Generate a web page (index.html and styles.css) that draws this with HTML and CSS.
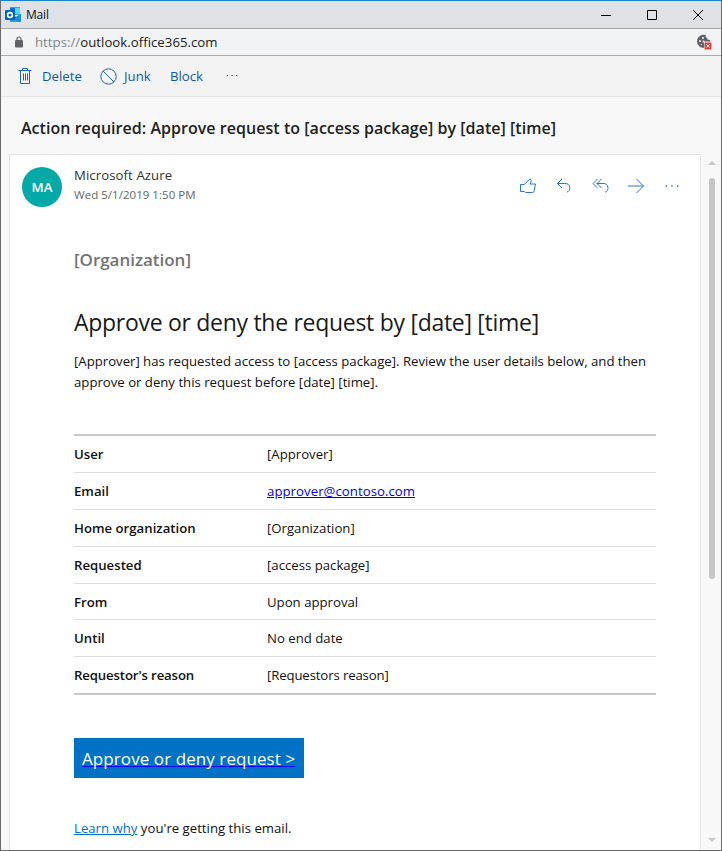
FILE: index.html
```html
<!DOCTYPE html>
<html lang="en">
<head>
<meta charset="utf-8">
<title>Mail</title>
<link rel="stylesheet" href="styles.css">
</head>
<body>
<div class="window">
  <header class="titlebar">
    <svg class="logo" width="16" height="16" viewBox="0 0 16 16">
      <path fill="#28a8ea" d="M5 0h10v8H5z"/><path fill="#50d9ff" d="M10 1h5v6h-5z"/><path fill="#0078d4" d="M5 1h5v6H5z"/>
      <path fill="#123b6d" d="M5 7l6 3 5-3v2l-7 5H5z"/><path fill="#1490df" d="M16 7v8H5l5-4z"/><path fill="#28a8ea" d="M5 13l11 2H5z"/>
      <rect y="3" width="10" height="10" rx="1" fill="#0364b8"/><circle cx="5" cy="8" r="2.4" fill="none" stroke="#fff" stroke-width="1.6"/>
    </svg>
    <span class="app-name">Mail</span>
    <div class="controls">
      <svg width="12" height="12" viewBox="0 0 12 12"><path d="M1 6.5h10"/></svg>
      <svg width="12" height="12" viewBox="0 0 12 12"><path d="M1.5 1.5h9v9h-9z"/></svg>
      <svg width="12" height="12" viewBox="0 0 12 12"><path d="M1 1l10 10M11 1L1 11"/></svg>
    </div>
  </header>
  <div class="address">
    <svg width="8" height="12" viewBox="0 0 8 12"><rect y="4" width="8" height="7.4" rx="1" fill="#5f6368"/><path d="M2 4.5V3a2 2 0 0 1 4 0v1.5" fill="none" stroke="#5f6368" stroke-width="1.2"/></svg>
    <span class="url"><span class="scheme">https://</span>outlook.office365.com</span>
    <svg class="cookie" width="16" height="16" viewBox="0 0 16 16">
      <path fill="#5f6368" d="M7 .8a6.500 6.500 0 1 0 1 13V8h6.500c0-1.500-.5-2-1.500-2.200-1.500.2-2-.8-1.700-1.800-1.500 0-2-1-1.300-2.700C9 .9 8 .7 7 .8z"/><g fill="#f1f3f4"><circle cx="7" cy="4" r="1"/><circle cx="4" cy="7" r="1"/><circle cx="7.500" cy="7.500" r="1"/><circle cx="5.500" cy="10.500" r=".8"/></g>
      <rect x="8" y="7.500" width="8" height="8.500" fill="#f1f3f4"/><rect x="8.500" y="8.500" width="7" height="7" rx=".5" fill="#db4437"/><path d="M10.500 10.500l3 3m0-3l-3 3" stroke="#fff"/>
    </svg>
  </div>
  <nav class="toolbar">
    <svg class="trash" width="14" height="16" viewBox="0 0 14 16"><path d="M.5 2.500h13M4.500 2.500v-2h5v2M2.500 2.500v13h9v-13M5.500 5.500v7M7.500 5.500v7M9.500 5.500v7"/></svg>
    <span class="t-delete">Delete</span>
    <svg class="ban" width="17" height="17" viewBox="0 0 17 17"><circle cx="8.500" cy="8.500" r="7.700"/><path d="M3.100 3.100l10.800 10.800"/></svg>
    <span class="t-junk">Junk</span>
    <span class="t-block">Block</span>
    <svg class="dots" width="13" height="4" viewBox="0 0 13 4"><path d="M.5 1.500H2M5.300 1.500h1.500M10 1.500h1.500"/></svg>
  </nav>
  <div class="subject"><span>Action required: Approve request to [access package] by [date] [time]</span></div>
  <main class="reading">
    <article class="card">
      <header class="sender">
        <div class="avatar">MA</div>
        <div class="who"><div class="name"><span>Microsoft Azure</span></div><div class="date"><span>Wed 5/1/2019 1:50 PM</span></div></div>
        <div class="actions">
          <svg width="18" height="18" viewBox="0 0 18 18"><path d="M1.500 7.500h3.800l5.500-5.500c2 0 1.700 2.200.2 5h5.500L15 14.500c-.2.700-.6 1-1.300 1H6.500l-1-1h-4z"/></svg>
          <svg width="18" height="18" viewBox="0 0 18 18"><path d="M7 2L2.500 6.500 7 11M2.500 6.500h7.300a4.500 4.500 0 0 1 2 8.700"/></svg>
          <svg width="18" height="18" viewBox="0 0 18 18"><path d="M6.500 2L2 6.500 6.500 11M10.500 2L6 6.500l4.500 4.500M6 6.500h6a4.500 4.500 0 0 1 2 8.700"/></svg>
          <svg width="18" height="18" viewBox="0 0 18 18"><path d="M1 9h15.500M9.500 2l7 7-7 7"/></svg>
          <svg class="more" width="18" height="18" viewBox="0 0 18 18"><path d="M2.500 9H4M8.200 9h1.500M14 9h1.500"/></svg>
        </div>
      </header>
      <div class="body">
        <div class="org"><span>[Organization]</span></div>
        <h1><span>Approve or deny the request by [date] [time]</span></h1>
        <p class="intro"><span class="l1">[Approver] has requested access to [access package]. Review the user details below, and then</span><br><span class="l2">approve or deny this request before [date] [time].</span></p>
        <dl class="details">
          <div><dt>User</dt><dd>[Approver]</dd></div>
          <div><dt>Email</dt><dd><a href="#">approver@contoso.com</a></dd></div>
          <div><dt>Home organization</dt><dd>[Organization]</dd></div>
          <div><dt>Requested</dt><dd>[access package]</dd></div>
          <div><dt>From</dt><dd>Upon approval</dd></div>
          <div><dt>Until</dt><dd>No end date</dd></div>
          <div><dt class="tight">Requestor's reason</dt><dd class="tight">[Requestors reason]</dd></div>
        </dl>
        <a class="cta" href="#"><span>Approve or deny request &gt;</span></a>
        <p class="why"><a href="#">Learn why</a> you're getting this email.</p>
      </div>
    </article>
    <div class="scroll">
      <svg width="8" height="4" viewBox="0 0 8 4"><path d="M0 4l4-4 4 4z" fill="#c3cacc"/></svg>
      <div class="thumb"></div>
      <svg class="down" width="8" height="4" viewBox="0 0 8 4"><path d="M0 0l4 4 4-4z" fill="#c3cacc"/></svg>
    </div>
  </main>
</div>
</body>
</html>
```
FILE: styles.css
```css
* { box-sizing: border-box; }
body { margin: 0; font-family: "Open Sans", "Noto Sans", sans-serif; font-size: 13.2px; color: #212121; overflow: hidden; }
svg { display: block; flex: none; }
p, h1, dl, dd { margin: 0; }
.window { width: 722px; height: 851px; border: 1px solid #6b6b6b; border-top-color: #1883d7; background: #f8f8f8; display: flex; flex-direction: column; white-space: nowrap; }
.titlebar { height: 28px; background: #dee1e6; border-bottom: 1px solid #aaabad; display: flex; align-items: center; padding: 0 17px 0 4px; flex: none; }
.app-name { font-size: 12px; margin-left: 5px; color: #111; letter-spacing: -.2px; }
.controls { margin-left: auto; display: flex; gap: 34px; }
.controls svg { fill: none; stroke: #000; stroke-width: 1; }
.address { height: 27px; background: #f1f3f4; border-bottom: 1px solid #aaabad; display: flex; align-items: center; padding: 0 9px 0 14px; flex: none; }
.url { margin-left: 12px; letter-spacing: .03px; }
.scheme { color: #80868b; }
.cookie { margin-left: auto; }
.toolbar { height: 41px; background: #f3f3f3; border-bottom: 1px solid #e6e6e6; display: flex; align-items: center; padding-left: 18px; color: #0f5ba8; flex: none; }
.toolbar svg { fill: none; stroke: #1f65b0; stroke-width: 1; }
.toolbar .trash { margin-left: -1px; }
.t-delete { margin-left: 10px; width: 58px; }
.t-junk { margin-left: 7px; width: 46px; }
.t-block { width: 56px; }
.subject { height: 57px; padding: 3px 0 0 20px; line-height: 56px; font-size: 16px; font-weight: 600; letter-spacing: .04px; flex: none; }
.reading { display: flex; flex: 1; min-height: 0; padding-left: 8px; }
.card { width: 692px; background: #fff; border: 1px solid #e5e5e5; border-bottom: 0; overflow: hidden; }
.sender { display: flex; padding: 12px 19px 0 12px; height: 94px; }
.avatar { width: 40px; height: 40px; border-radius: 50%; background: #03a9a6; color: #fff; font-size: 13.2px; font-weight: 600; line-height: 40px; text-align: center; }
.who { margin-left: 12px; }
.name { line-height: 17px; color: #333; letter-spacing: .08px; }
.date { line-height: 22px; font-size: 11.500px; color: #666; letter-spacing: .03px; }
.actions { display: flex; gap: 18px; margin-left: auto; padding-top: 10px; }
.actions svg { fill: none; stroke: #2876d2; stroke-width: 1; }
.actions .more { stroke-width: 1.5; }
.body { padding-left: 64px; width: 646px; color: #111; }
.org { font-size: 17px; font-weight: 600; color: #737373; line-height: 22px; letter-spacing: -.03px; }
h1 { font-size: 23px; font-weight: 400; line-height: 32px; margin-top: 35px; color: #1a1a1a; letter-spacing: -.29px; }
.intro { line-height: 21px; margin-top: 13px; letter-spacing: -.01px; }
.details { margin-top: 41px; border-top: 2px solid #c8c8c8; border-bottom: 2px solid #c8c8c8; }
.details div { display: grid; grid-template-columns: 193px 1fr; height: 36.900px; line-height: 36px; border-bottom: 1px solid #ddd; }
.details div:last-child { border: 0; height: 36px; }
dt { font-weight: 600; }
.details .tight { letter-spacing: -.13px; }
.details a { color: #00e; letter-spacing: .05px; }
.cta { display: block; width: 230px; height: 40px; margin-top: 43px; background: #0072c6; color: #fff; font-size: 17px; line-height: 41px; padding-left: 8px; letter-spacing: .08px; text-decoration: none; }
.cta span { text-decoration: underline #00f; text-decoration-skip-ink: none; }
.why { margin-top: 40px; line-height: 20px; }
.why a { color: #0072c6; }
.scroll { width: 19px; padding: 7px 0 8px 2px; display: flex; flex-direction: column; align-items: center; }
.thumb { width: 6px; height: 401px; border-radius: 3px; background: #c6c6c6; margin-top: 13px; }
.down { margin-top: auto; }
```
